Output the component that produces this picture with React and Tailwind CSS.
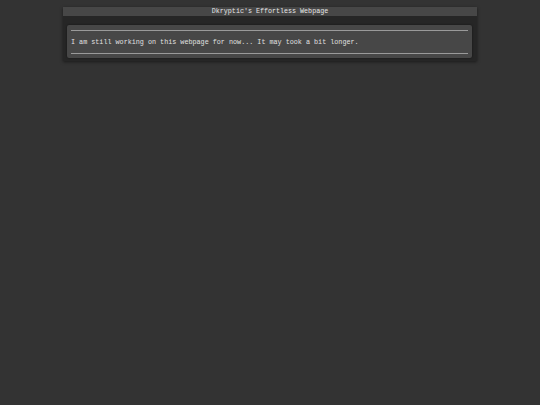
export default function App() {
  const mono = { fontFamily: '"Liberation Mono", "DejaVu Sans Mono", monospace' }
  return (
    <div className="min-h-screen bg-[#333333] pt-[7px] antialiased" style={mono}>
      <div className="mx-auto w-[414px] shadow-[0_1px_3px_rgba(0,0,0,0.5)]">
        <div className="h-[9px] bg-[#474747] flex items-center justify-center text-[6.7px] leading-none text-[#e6e6e6]">
          Dkryptic's Effortless Webpage
        </div>
        <div className="bg-[#262626] pl-[4px] pr-[5px] pt-[9px] pb-[3px]">
          <div className="bg-[#474747] rounded-[2px] px-[4px] pt-[5px] pb-[4px] shadow-[0_0_2px_rgba(0,0,0,0.6)]">
            <div className="h-px bg-[#9a9a9a]" />
            <div className="h-[22px] flex items-center text-[6.75px] leading-none text-[#e0e0e0]">
              I am still working on this webpage for now... It may took a bit longer.
            </div>
            <div className="h-px bg-[#9a9a9a]" />
          </div>
        </div>
      </div>
    </div>
  )
}
